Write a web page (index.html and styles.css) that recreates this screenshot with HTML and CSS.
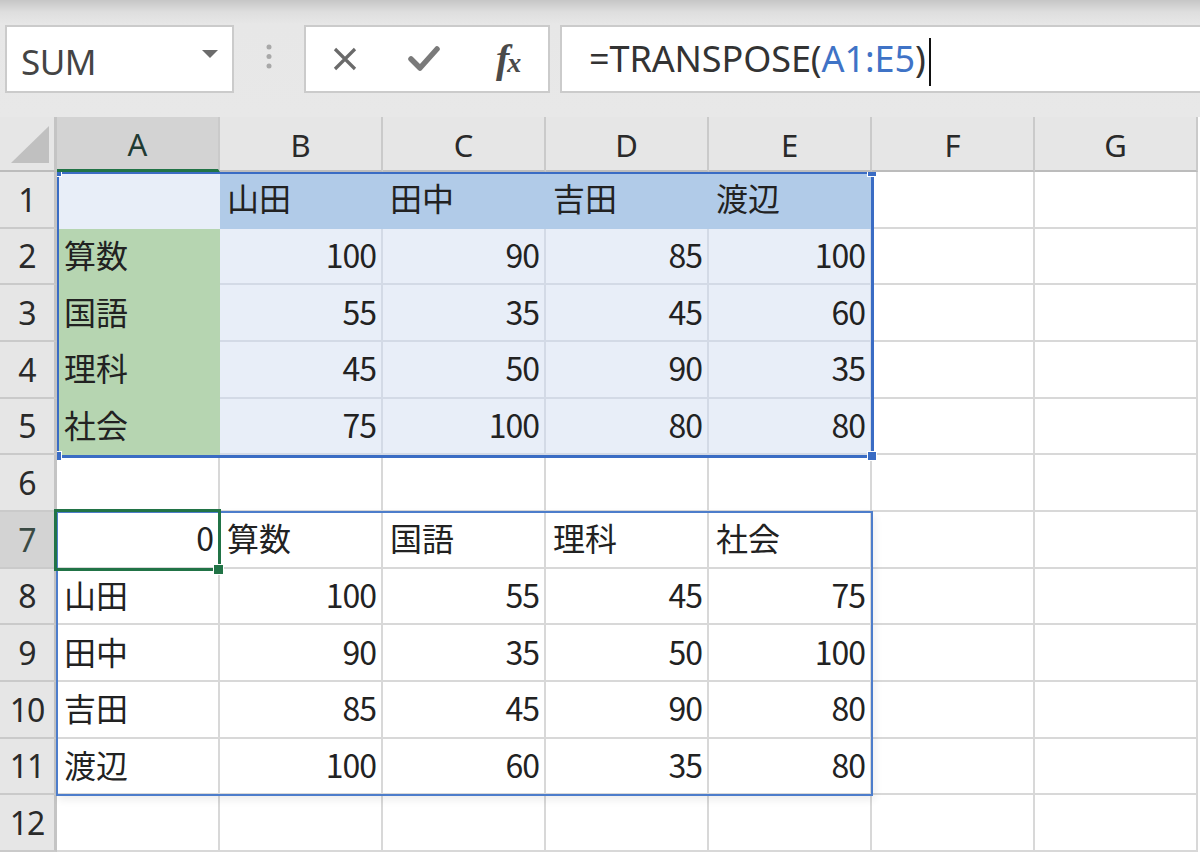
FILE: index.html
```html
<!DOCTYPE html>
<html lang="ja">
<head>
<meta charset="utf-8">
<title>TRANSPOSE</title>
<link rel="stylesheet" href="styles.css">
</head>
<body>
<div class="app">
  <div class="toolbar">
    <div class="namebox">
      <span class="name">SUM</span>
      <svg class="arrow" width="16" height="10" viewBox="0 0 16 10"><path d="M0 1 H16 L8 9 Z" fill="#6b6b6b"/></svg>
    </div>
    <div class="grip">
      <svg width="8" height="28" viewBox="0 0 8 28"><circle cx="4" cy="4" r="2.5" fill="#a8a8a8"/><circle cx="4" cy="13.5" r="2.5" fill="#a8a8a8"/><circle cx="4" cy="23" r="2.5" fill="#a8a8a8"/></svg>
    </div>
    <div class="btnbox">
      <span class="btn"><svg width="26" height="24" viewBox="0 0 26 24"><path d="M3 2 L23 22 M23 2 L3 22" stroke="#6a6a6a" stroke-width="3.2" fill="none"/></svg></span>
      <span class="btn"><svg width="32" height="26" viewBox="0 0 32 26"><path d="M3 13 L12 22 L29 3" stroke="#7a7a7a" stroke-width="5.5" fill="none" stroke-linejoin="round" stroke-linecap="round"/></svg></span>
      <span class="btn fx"><i class="f">f</i><i class="x">x</i></span>
    </div>
    <div class="formula">
      <span>=TRANSPOSE(</span><span class="ref">A1:E5</span><span>)</span><span class="caret"></span>
    </div>
  </div>

  <div class="sheet">
    <div class="corner"><svg width="38" height="37" viewBox="0 0 38 37"><path d="M0 37 L38 37 L38 0 Z" fill="#c0c0c0"/></svg></div>
    <div class="ch on">A</div><div class="ch">B</div><div class="ch">C</div><div class="ch">D</div><div class="ch">E</div><div class="ch">F</div><div class="ch">G</div>

    <div class="rh">1</div>
    <div class="c lt a1"></div><div class="c bl">山田</div><div class="c bl">田中</div><div class="c bl">吉田</div><div class="c bl">渡辺</div><div class="c"></div><div class="c"></div>

    <div class="rh">2</div>
    <div class="c gr">算数</div><div class="c lt n">100</div><div class="c lt n">90</div><div class="c lt n">85</div><div class="c lt n">100</div><div class="c"></div><div class="c"></div>

    <div class="rh">3</div>
    <div class="c gr">国語</div><div class="c lt n">55</div><div class="c lt n">35</div><div class="c lt n">45</div><div class="c lt n">60</div><div class="c"></div><div class="c"></div>

    <div class="rh">4</div>
    <div class="c gr">理科</div><div class="c lt n">45</div><div class="c lt n">50</div><div class="c lt n">90</div><div class="c lt n">35</div><div class="c"></div><div class="c"></div>

    <div class="rh">5</div>
    <div class="c gr">社会</div><div class="c lt n">75</div><div class="c lt n">100</div><div class="c lt n">80</div><div class="c lt n">80</div><div class="c"></div><div class="c"></div>

    <div class="rh">6</div>
    <div class="c"></div><div class="c"></div><div class="c"></div><div class="c"></div><div class="c"></div><div class="c"></div><div class="c"></div>

    <div class="rh on">7</div>
    <div class="c n">0</div><div class="c t">算数</div><div class="c">国語</div><div class="c">理科</div><div class="c">社会</div><div class="c"></div><div class="c"></div>

    <div class="rh">8</div>
    <div class="c">山田</div><div class="c n">100</div><div class="c n">55</div><div class="c n">45</div><div class="c n">75</div><div class="c"></div><div class="c"></div>

    <div class="rh">9</div>
    <div class="c">田中</div><div class="c n">90</div><div class="c n">35</div><div class="c n">50</div><div class="c n">100</div><div class="c"></div><div class="c"></div>

    <div class="rh">10</div>
    <div class="c">吉田</div><div class="c n">85</div><div class="c n">45</div><div class="c n">90</div><div class="c n">80</div><div class="c"></div><div class="c"></div>

    <div class="rh">11</div>
    <div class="c">渡辺</div><div class="c n">100</div><div class="c n">60</div><div class="c n">35</div><div class="c n">80</div><div class="c"></div><div class="c"></div>

    <div class="rh">12</div>
    <div class="c"></div><div class="c"></div><div class="c"></div><div class="c"></div><div class="c"></div><div class="c"></div><div class="c"></div>

    <div class="clip">
      <div class="refbox"></div>
      <div class="handle h-tl"></div>
      <div class="handle h-tr"></div>
      <div class="handle h-bl"></div>
      <div class="handle h-br"></div>
    </div>
    <div class="spill"></div>
    <div class="selbox"></div>
    <div class="fill-handle"></div>
  </div>
</div>
</body>
</html>
```

FILE: styles.css
```css
* { box-sizing: border-box; }
html, body { margin: 0; padding: 0; }
body {
  width: 1200px;
  height: 852px;
  overflow: hidden;
  background: #e8e8e8;
  font-family: "Noto Sans", "Noto Sans CJK JP", sans-serif;
}
.app { width: 1200px; height: 852px; }

/* ---------- formula bar ---------- */
.toolbar {
  height: 117px;
  display: flex;
  align-items: flex-start;
  padding: 25px 0 0 5px;
  background: linear-gradient(#c6c6c6 0px, #dedede 12px, #e7e7e7 24px, #e8e8e8 100%);
}
.namebox {
  width: 229px;
  height: 68px;
  background: #fff;
  border: 2px solid #cbcbcb;
  display: flex;
  align-items: center;
  padding: 4px 14px 0 14px;
}
.name {
  flex: 1;
  font-family: "Noto Sans", sans-serif;
  font-size: 35px;
  color: #444;
  letter-spacing: -0.5px;
}
.arrow { margin-top: -14px; }
.grip {
  width: 70px;
  height: 68px;
  display: flex;
  align-items: center;
  justify-content: center;
  padding-bottom: 4px;
}
.btnbox {
  width: 246px;
  height: 68px;
  background: #fff;
  border: 2px solid #cbcbcb;
  display: flex;
}
.btn {
  flex: 1;
  display: flex;
  align-items: center;
  justify-content: center;
}
.fx {
  font-family: "Liberation Serif", serif;
  color: #4a4a4a;
  padding-left: 6px;
  padding-bottom: 2px;
}
.fx .f { font-size: 40px; font-style: italic; font-weight: bold; }
.fx .x { font-size: 28px; font-style: italic; font-weight: bold; margin-left: -2px; margin-top: 10px; }
.formula {
  flex: 1;
  height: 68px;
  margin-left: 10px;
  background: #fff;
  border: 2px solid #cbcbcb;
  border-right: none;
  display: flex;
  align-items: center;
  padding-left: 27px;
  padding-bottom: 2px;
  font-family: "Noto Sans", sans-serif;
  font-size: 36px;
  color: #333;
  letter-spacing: -0.1px;
  white-space: nowrap;
}
.formula .ref { color: #3f73c6; }
.caret {
  width: 2px;
  height: 48px;
  background: #111;
  margin-left: 3px;
  margin-top: 8px;
}

/* ---------- sheet ---------- */
.sheet {
  position: relative;
  display: grid;
  grid-template-columns: 57px repeat(7, 163px);
  grid-template-rows: 55px repeat(12, 56.6667px);
  background: #fff;
  width: 1200px;
  height: 735px;
}
.corner {
  background: #e6e6e6;
  border-right: 3px solid #c4c4c4;
  border-bottom: 2px solid #bcbcbc;
  display: flex;
  align-items: flex-end;
  justify-content: flex-end;
  padding: 0 5px 7px 0;
}
.ch {
  background: #e6e6e6;
  border-right: 2px solid #cacaca;
  border-bottom: 2px solid #bcbcbc;
  display: flex;
  align-items: center;
  justify-content: center;
  font-family: "Noto Sans", sans-serif;
  font-size: 31px;
  color: #2a2a2a;
  padding-top: 2px;
}
.ch.on {
  background: #d3d3d3;
  border-bottom: 3px solid #217346;
  color: #1f3b33;
}
.rh {
  background: #e6e6e6;
  border-right: 3px solid #c4c4c4;
  border-bottom: 2px solid #cacaca;
  display: flex;
  align-items: center;
  justify-content: center;
  font-family: "Noto Sans", sans-serif;
  font-size: 32px;
  color: #2a2a2a;
  letter-spacing: -1px;
  padding-top: 0;
}
.rh.on { background: #d3d3d3; color: #3a4a44; }

.c {
  border-right: 2px solid #d8d8d8;
  border-bottom: 2px solid #d8d8d8;
  display: flex;
  align-items: center;
  padding: 0 6px 4px 7px;
  font-family: "Noto Sans CJK JP", "Noto Sans", sans-serif;
  font-size: 32px;
  color: #222;
  white-space: nowrap;
}
.c.n {
  justify-content: flex-end;
  letter-spacing: -1px;
  padding-right: 5px;
}
.c.lt { background: #e8eef8; border-color: #d3dae6; }
.c.a1 { border-color: #e8eef8; }
.c.bl { background: #b1cbe8; border-color: #b1cbe8; }
.c.gr { background: #b6d5b1; border-color: #b6d5b1; }

/* overlays */
.clip {
  position: absolute;
  left: 57px;
  top: 55px;
  right: 0;
  bottom: 0;
  overflow: hidden;
  pointer-events: none;
}
.refbox {
  position: absolute;
  left: -1px;
  top: -1px;
  width: 818px;
  height: 287px;
  border: 3px solid #3a6cc4;
}
.handle {
  position: absolute;
  width: 10px;
  height: 10px;
  background: #3a6cc4;
  border: 1px solid #fff;
}
.h-tl { left: -5px; top: -5px; }
.h-tr { left: 810px; top: -5px; }
.h-bl { left: -5px; top: 279px; }
.h-br { left: 810px; top: 279px; }

.spill {
  position: absolute;
  left: 56px;
  top: 394px;
  width: 817px;
  height: 285px;
  border: 2px solid #4d7dcb;
  box-shadow: 2px 4px 8px rgba(0, 0, 0, 0.07);
  pointer-events: none;
}
.selbox {
  position: absolute;
  left: 54px;
  top: 392px;
  width: 167px;
  height: 62px;
  border: 3px solid #217346;
  pointer-events: none;
}
.fill-handle {
  position: absolute;
  left: 213px;
  top: 447px;
  width: 11px;
  height: 11px;
  background: #217346;
  border: 1px solid #fff;
}
```
